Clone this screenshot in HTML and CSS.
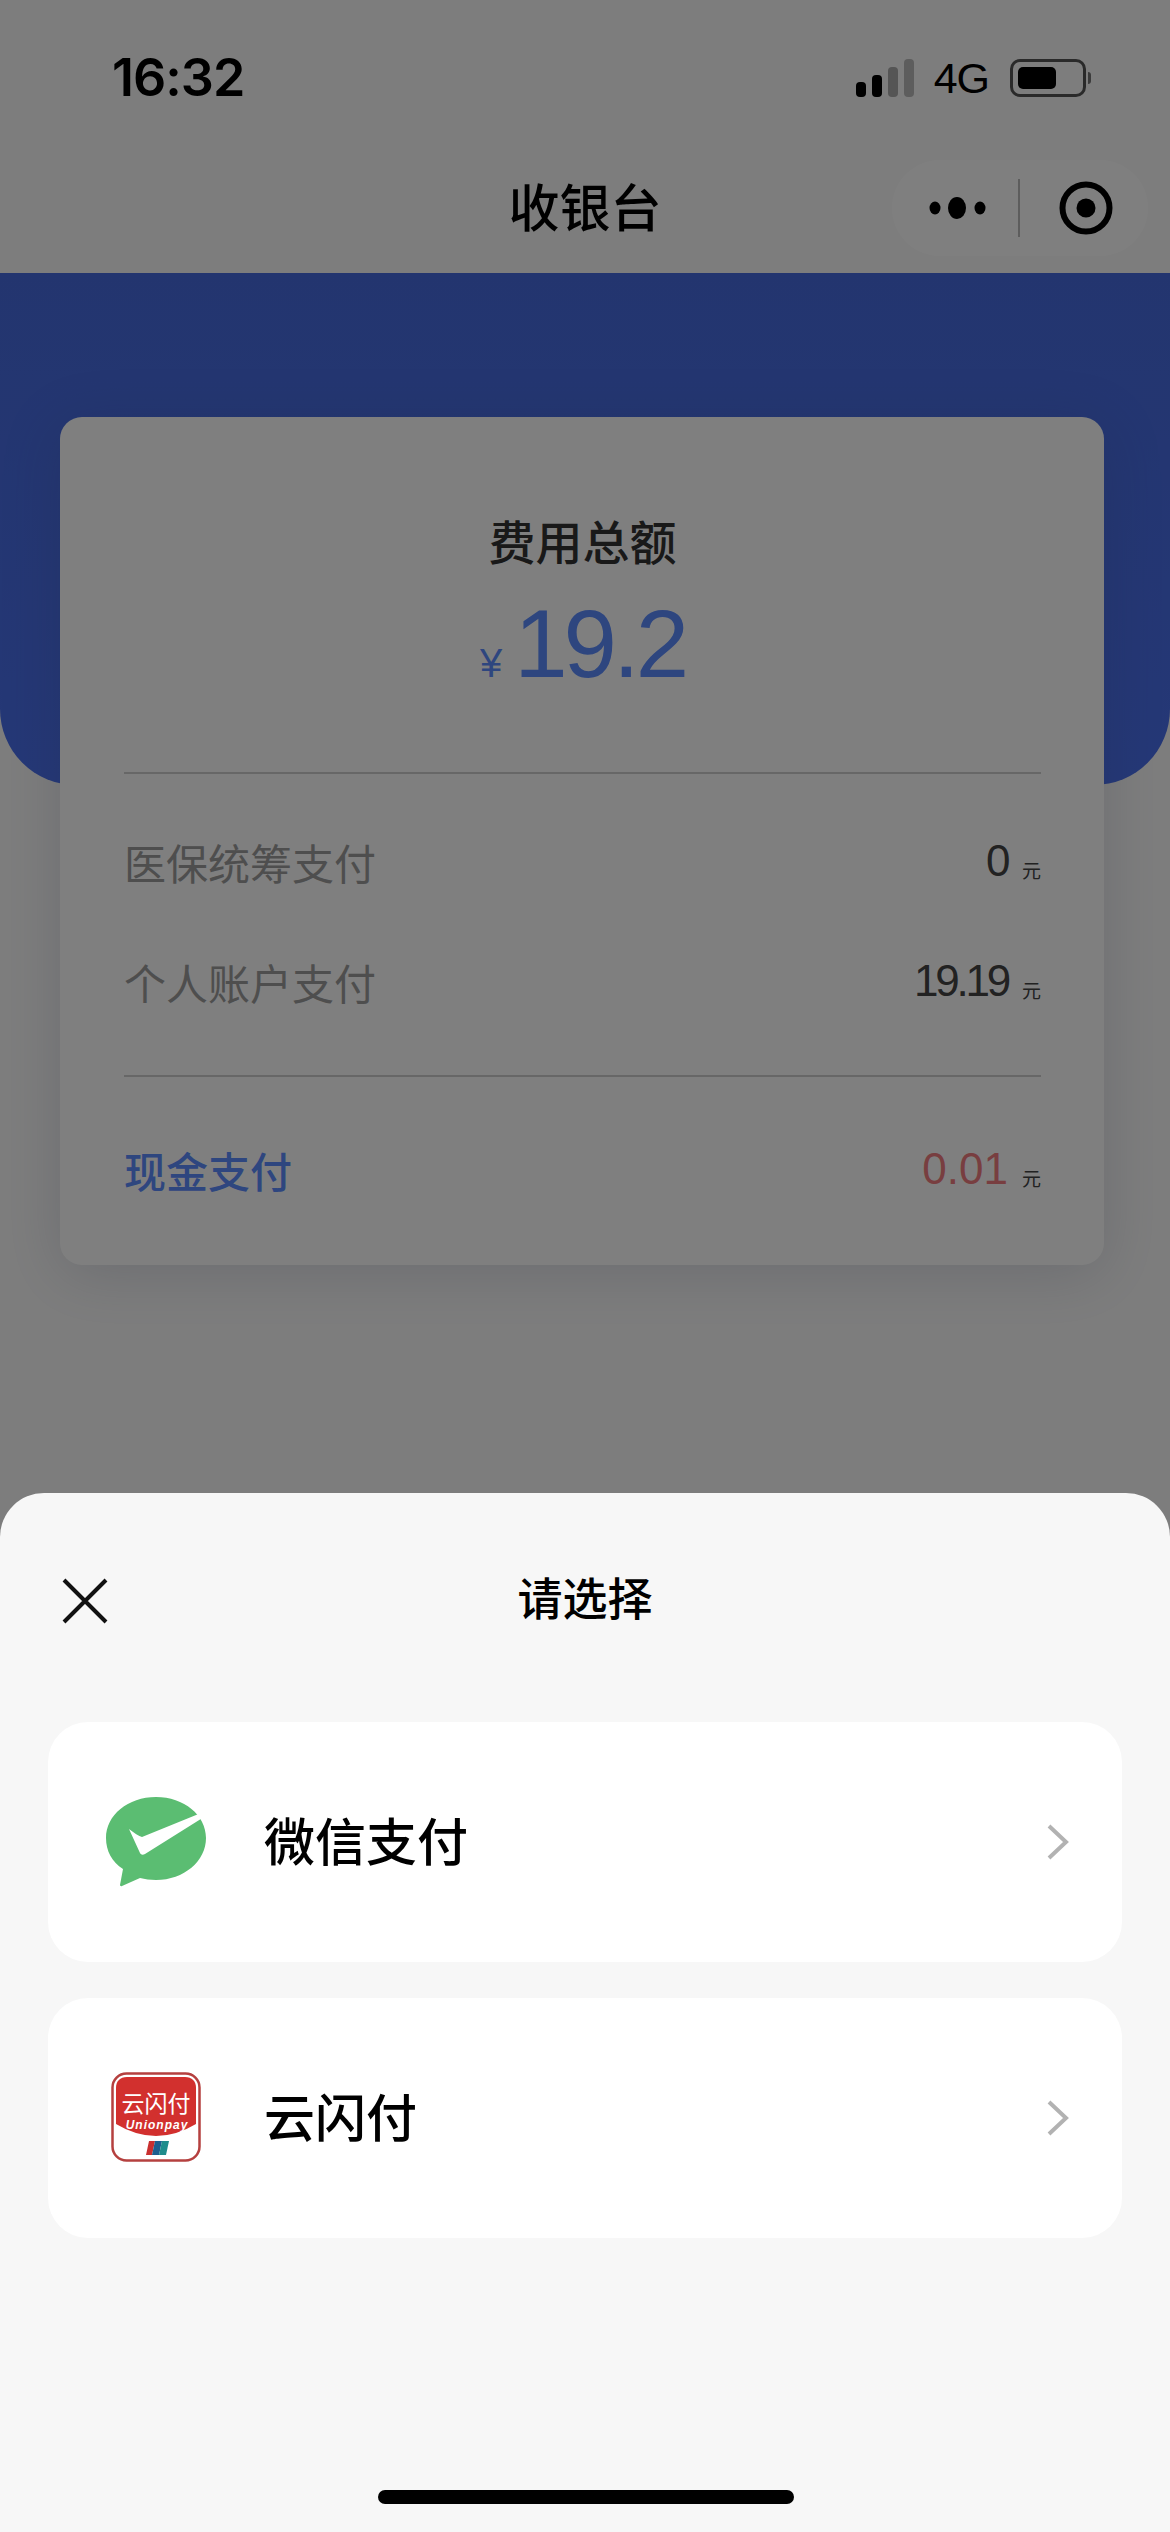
FILE: index.html
```html
<!DOCTYPE html>
<html lang="zh-CN">

<head>
    <meta charset="UTF-8">
    <meta name="viewport" content="width=device-width, initial-scale=1.0">
    <title>收银台</title>
    <link rel="stylesheet" href="styles.css">
</head>

<body>
    <div class="screen">
        <div class="status-bar">
            <span class="time">16:32</span>
            <div class="status-right">
                <div class="signal">
                    <i class="bar bar-1"></i>
                    <i class="bar bar-2"></i>
                    <i class="bar bar-3"></i>
                    <i class="bar bar-4"></i>
                </div>
                <span class="network">4G</span>
                <div class="battery"><i class="battery-level"></i></div>
                <i class="battery-cap"></i>
            </div>
        </div>

        <div class="nav-bar">
            <h1 class="nav-title">收银台</h1>
            <div class="capsule">
                <svg class="capsule-more" width="58" height="26" viewBox="0 0 58 26">
                    <ellipse cx="6" cy="13" rx="5.500" ry="6.500" fill="#000" />
                    <ellipse cx="28" cy="13" rx="9" ry="11" fill="#000" />
                    <ellipse cx="51" cy="13" rx="5.500" ry="6.500" fill="#000" />
                </svg>
                <i class="capsule-line"></i>
                <svg class="capsule-close" width="54" height="54" viewBox="0 0 54 54">
                    <circle cx="27" cy="27" r="23.500" fill="none" stroke="#000" stroke-width="6" />
                    <circle cx="27" cy="27" r="9.500" fill="#000" />
                </svg>
            </div>
        </div>

        <div class="hero">
            <div class="card">
                <div class="total">
                    <div class="total-label">费用总额</div>
                    <div class="total-amount"><span class="yen">¥</span><span class="total-num">19.2</span></div>
                </div>
                <div class="rows">
                    <div class="row">
                        <span class="row-label">医保统筹支付</span>
                        <span class="row-value">0<small class="unit">元</small></span>
                    </div>
                    <div class="row">
                        <span class="row-label">个人账户支付</span>
                        <span class="row-value row-value-tight">19.19<small class="unit">元</small></span>
                    </div>
                </div>
                <div class="row row-cash">
                    <span class="row-label">现金支付</span>
                    <span class="row-value">0.01<small class="unit">元</small></span>
                </div>
            </div>
        </div>

        <div class="overlay"></div>

        <div class="sheet">
            <div class="sheet-head">
                <svg class="sheet-close" width="46" height="46" viewBox="0 0 46 46">
                    <path d="M2 2 L44 44 M44 2 L2 44" fill="none" stroke="#111" stroke-width="4" />
                </svg>
                <h2 class="sheet-title">请选择</h2>
            </div>

            <div class="option">
                <svg class="option-icon" width="102" height="92" viewBox="0 0 102 92">
                    <path d="M51 1 C79 1 101 19 101 42 C101 65 79 84 51 84 C45 84 40 83 35 82 L17 90 C16 90.500 15 90 15 89 L18 73 C7 66 1 55 1 42 C1 19 23 1 51 1 Z" fill="#5bbd72" />
                    <path d="M24 33 C29 37 34 40 37 41 L96 17 L99 21 L40 58 C38 59 36 59 35 57 Z" fill="#fff" />
                </svg>
                <span class="option-name">微信支付</span>
                <svg class="chevron" width="24" height="38" viewBox="0 0 24 38">
                    <path d="M3 3 L20 19 L3 35" fill="none" stroke="#b2b2b2" stroke-width="4" />
                </svg>
            </div>

            <div class="option">
                <svg class="option-icon" width="102" height="92" viewBox="0 0 102 92">
                    <rect x="7.500" y="1.500" width="87" height="87" rx="14" fill="#fff" stroke="#b5403f" stroke-width="2.500" />
                    <path d="M11 16 C11 9 15 5 22 5 L80 5 C87 5 91 9 91 16 L91 52 Q51 76 11 52 Z" fill="#d2302e" />
                    <text class="logo-cn" x="51" y="40" text-anchor="middle">云闪付</text>
                    <text class="logo-en" x="52" y="57" text-anchor="middle">Unionpay</text>
                    <path d="M44 69 L50 69 L47 83 L41 83 Z" fill="#c9302f" />
                    <path d="M50 69 L57 69 L54 83 L47 83 Z" fill="#1c5f8f" />
                    <path d="M57 69 L64 69 L61 83 L54 83 Z" fill="#1f8c8c" />
                </svg>
                <span class="option-name">云闪付</span>
                <svg class="chevron" width="24" height="38" viewBox="0 0 24 38">
                    <path d="M3 3 L20 19 L3 35" fill="none" stroke="#b2b2b2" stroke-width="4" />
                </svg>
            </div>

            <div class="home-indicator"></div>
        </div>
    </div>
</body>

</html>
```

FILE: styles.css
```css
* {
    box-sizing: border-box;
}

body {
    margin: 0;
    padding: 0;
    background: #fff;
    font-family: "Liberation Sans", "Noto Sans CJK SC", sans-serif;
}

.screen {
    position: relative;
    width: 1170px;
    height: 2532px;
    overflow: hidden;
    background: #fbfbfb;
}

/* status bar */
.status-bar {
    height: 154px;
    padding: 48px 79px 0 112px;
    display: flex;
    justify-content: space-between;
    align-items: flex-start;
}

.time {
    font-family: Inter, sans-serif;
    font-size: 52px;
    font-weight: 600;
    line-height: 60px;
    letter-spacing: -1px;
    color: #000;
}

.status-right {
    display: flex;
    align-items: center;
    height: 60px;
}

.signal {
    display: flex;
    align-items: flex-end;
    gap: 6px;
    height: 38px;
    margin-right: 20px;
}

.bar {
    display: block;
    width: 10px;
    border-radius: 4px;
    background: #000;
}

.bar-1 { height: 15px; }
.bar-2 { height: 22px; }
.bar-3 { height: 30px; background: #aaa; }
.bar-4 { height: 38px; background: #bbb; }

.network {
    font-size: 43px;
    letter-spacing: -1px;
    line-height: 60px;
    color: #000;
    margin-right: 21px;
}

.battery {
    width: 76px;
    height: 38px;
    padding: 5px;
    border: 3px solid #555;
    border-radius: 10px;
}

.battery-level {
    display: block;
    width: 38px;
    height: 100%;
    border-radius: 5px;
    background: #000;
}

.battery-cap {
    display: block;
    width: 3px;
    height: 12px;
    margin-left: 2px;
    border-radius: 0 3px 3px 0;
    background: #777;
}

/* nav */
.nav-bar {
    position: relative;
    height: 119px;
    display: flex;
    align-items: center;
    justify-content: center;
}

.nav-title {
    margin: 0 0 18px;
    font-size: 51px;
    font-weight: 500;
    color: #000;
}

.capsule {
    position: absolute;
    top: 6px;
    right: 22px;
    width: 256px;
    height: 96px;
    display: flex;
    align-items: center;
    border-radius: 48px;
    background: #ffffff;
}

.capsule-more {
    margin-left: 37px;
}

.capsule-line {
    display: block;
    width: 2px;
    height: 58px;
    margin: 0 39px 0 31px;
    background: #bbb;
}

/* hero and card */
.hero {
    height: 512px;
    padding: 144px 66px 0 60px;
    border-radius: 0 0 76px 76px;
    background: linear-gradient(180deg, #476bdf 0%, #4a70ee 100%);
}

.card {
    height: 848px;
    padding: 0 63px 0 64px;
    border-radius: 22px;
    background: #fff;
    box-shadow: 0 10px 60px rgba(60, 70, 110, 0.18);
}

.total {
    height: 357px;
    padding-top: 95px;
    border-bottom: 2px solid #cfcfcf;
    text-align: center;
}

.total-label {
    font-size: 47px;
    font-weight: 500;
    line-height: 64px;
    color: #333;
}

.total-amount {
    margin-top: 13px;
    line-height: 110px;
    color: #5c8cff;
}

.yen {
    margin-right: 12px;
    font-size: 40px;
}

.total-num {
    font-size: 96px;
    letter-spacing: -4px;
}

.rows {
    height: 303px;
    padding-top: 27px;
    border-bottom: 2px solid #cfcfcf;
}

.row {
    height: 120px;
    display: flex;
    justify-content: space-between;
    align-items: center;
}

.row-label {
    font-size: 42px;
    color: #9c9c9c;
}

.row-value {
    font-size: 44px;
    letter-spacing: -2.500px;
    color: #444;
}

.row-value-tight {
    letter-spacing: -3.200px;
}

.unit {
    margin-left: 14px;
    font-size: 19px;
    letter-spacing: 0;
    vertical-align: -2px;
}

.row-cash {
    margin-top: 32px;
}

.row-cash .row-label {
    font-weight: 500;
    color: #5c8cff;
}

.row-cash .row-value {
    letter-spacing: 0;
    color: #f07d80;
}

.row-cash .unit {
    color: #444;
}

.overlay {
    position: absolute;
    top: 0;
    left: 0;
    width: 100%;
    height: 100%;
    background: rgba(0, 0, 0, 0.5);
}

/* bottom sheet */
.sheet {
    position: absolute;
    left: 0;
    bottom: 0;
    width: 100%;
    height: 1039px;
    padding: 0 48px;
    border-radius: 44px 44px 0 0;
    background: #f7f7f7;
}

.sheet-head {
    position: relative;
    height: 229px;
    padding-top: 75px;
    text-align: center;
}

.sheet-close {
    position: absolute;
    top: 85px;
    left: 14px;
}

.sheet-title {
    margin: 0;
    font-size: 45px;
    font-weight: 500;
    line-height: 66px;
    color: #000;
}

.option {
    height: 240px;
    margin-bottom: 36px;
    padding: 0 52px 0 57px;
    display: flex;
    align-items: center;
    border-radius: 40px;
    background: #fff;
}

.option-name {
    flex: 1;
    margin: 0 0 6px 57px;
    font-size: 51px;
    font-weight: 500;
    color: #000;
}

.logo-cn {
    font-size: 23px;
    fill: #fff;
}

.logo-en {
    font-size: 12px;
    font-weight: bold;
    font-style: italic;
    letter-spacing: 1px;
    fill: #fff;
}

.home-indicator {
    position: absolute;
    left: 378px;
    bottom: 28px;
    width: 416px;
    height: 14px;
    border-radius: 7px;
    background: #000;
}
```
